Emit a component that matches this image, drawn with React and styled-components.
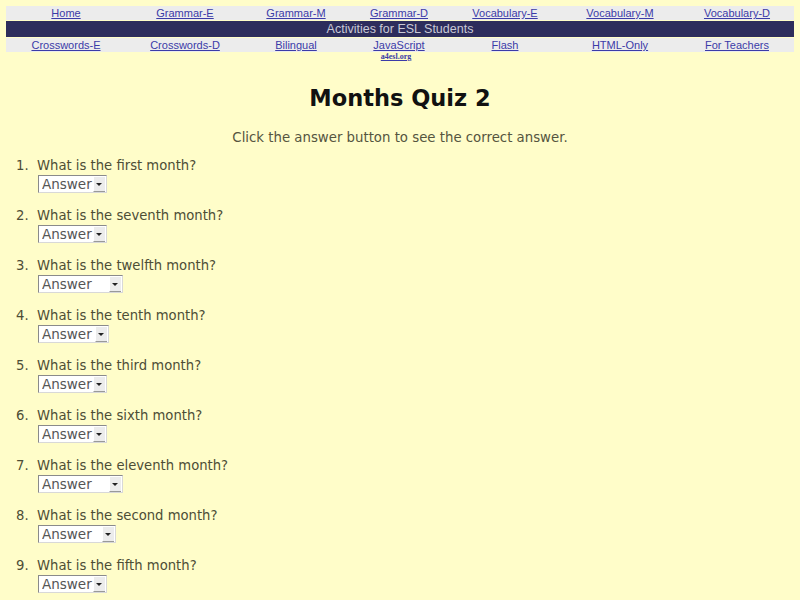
import styled, { createGlobalStyle } from "styled-components";

const links1 = ["Home", "Grammar-E", "Grammar-M", "Grammar-D", "Vocabulary-E", "Vocabulary-M", "Vocabulary-D"];
const links2 = ["Crosswords-E", "Crosswords-D", "Bilingual", "JavaScript", "Flash", "HTML-Only", "For Teachers"];

const questions = [
  { q: "What is the first month?", w: 69 },
  { q: "What is the seventh month?", w: 69 },
  { q: "What is the twelfth month?", w: 85 },
  { q: "What is the tenth month?", w: 71 },
  { q: "What is the third month?", w: 69 },
  { q: "What is the sixth month?", w: 69 },
  { q: "What is the eleventh month?", w: 85 },
  { q: "What is the second month?", w: 78 },
  { q: "What is the fifth month?", w: 69 },
];

export default function App() {
  return (
    <>
      <GlobalStyle />
      <Nav>
        <NavRow>
          {links1.map((l) => (
            <NavLink key={l} href="#">{l}</NavLink>
          ))}
        </NavRow>
        <Banner>Activities for ESL Students</Banner>
        <NavRow>
          {links2.map((l) => (
            <NavLink key={l} href="#">{l}</NavLink>
          ))}
        </NavRow>
      </Nav>
      <Credit href="#">a4esl.org</Credit>
      <Title>Months Quiz 2</Title>
      <Intro>Click the answer button to see the correct answer.</Intro>
      <Quiz>
        {questions.map((item, i) => (
          <Item key={i}>
            {item.q}
            <SelectWrap $w={item.w}>
              <Select defaultValue="a">
                <option value="a">Answer</option>
              </Select>
            </SelectWrap>
          </Item>
        ))}
      </Quiz>
    </>
  );
}

const GlobalStyle = createGlobalStyle`
  body {
    margin: 6px;
    background: #fffdc9;
    font-family: "DejaVu Sans", Verdana, sans-serif;
  }
`;

const Nav = styled.div`
  display: flex;
  flex-direction: column;
  gap: 1px;
`;

const NavRow = styled.div`
  display: grid;
  grid-template-columns: 120px 118px 104px 102px 110px 120px 114px;
  background: #ececec;
  height: 14px;
  align-items: center;
`;

const NavLink = styled.a`
  text-align: center;
  font-family: "Liberation Sans", Arial, sans-serif;
  font-size: 11px;
  color: #3b3ba8;
  text-decoration: underline;
`;

const Banner = styled.div`
  background: #2d2d5c;
  color: #c9c9d6;
  font-family: "Liberation Sans", Arial, sans-serif;
  font-size: 12.5px;
  height: 16px;
  line-height: 16px;
  text-align: center;
`;

const Credit = styled.a`
  display: block;
  text-align: center;
  margin-left: -8px;
  font-family: "Liberation Serif", serif;
  font-weight: bold;
  font-size: 8px;
  line-height: 10px;
  color: #3b3ba8;
  text-decoration: underline;
`;

const Title = styled.h1`
  margin: 21px 0 0;
  text-align: center;
  font-family: "Comic Sans MS", "DejaVu Sans", sans-serif;
  font-size: 22.5px;
  font-weight: bold;
  color: #111;
  line-height: 30px;
`;

const Intro = styled.p`
  margin: 17px 0 0;
  text-align: center;
  font-size: 13.3px;
  color: #55553f;
`;

const Quiz = styled.ol`
  margin: 13px 0 0;
  padding-left: 31px;
  font-size: 13.2px;
  color: #4d4d36;

  li::marker {
    content: counter(list-item) ".  ";
  }
`;

const Item = styled.li`
  height: 50px;
  line-height: 16px;
`;

const SelectWrap = styled.div`
  position: relative;
  margin-top: 1px;
  margin-left: 1px;
  width: ${(p) => p.$w}px;
  height: 18px;

  &::after {
    content: "";
    position: absolute;
    right: 2px;
    top: 2px;
    width: 11px;
    height: 14px;
    background: #ececec;
    border-left: 1px solid #fff;
    border-bottom: 1px solid #999;
    pointer-events: none;
  }
  &::before {
    content: "";
    position: absolute;
    right: 5px;
    top: 8px;
    border-left: 3px solid transparent;
    border-right: 3px solid transparent;
    border-top: 3px solid #222;
    z-index: 1;
    pointer-events: none;
  }
`;

const Select = styled.select`
  appearance: none;
  width: 100%;
  height: 100%;
  box-sizing: border-box;
  margin: 0;
  padding: 0 0 0 3px;
  background: #fff;
  border: 1px solid;
  border-color: #8a8a8a #d8d8d8 #d8d8d8 #8a8a8a;
  border-radius: 0;
  font-family: "DejaVu Sans", Verdana, sans-serif;
  font-size: 13.5px;
  color: #555;
`;
